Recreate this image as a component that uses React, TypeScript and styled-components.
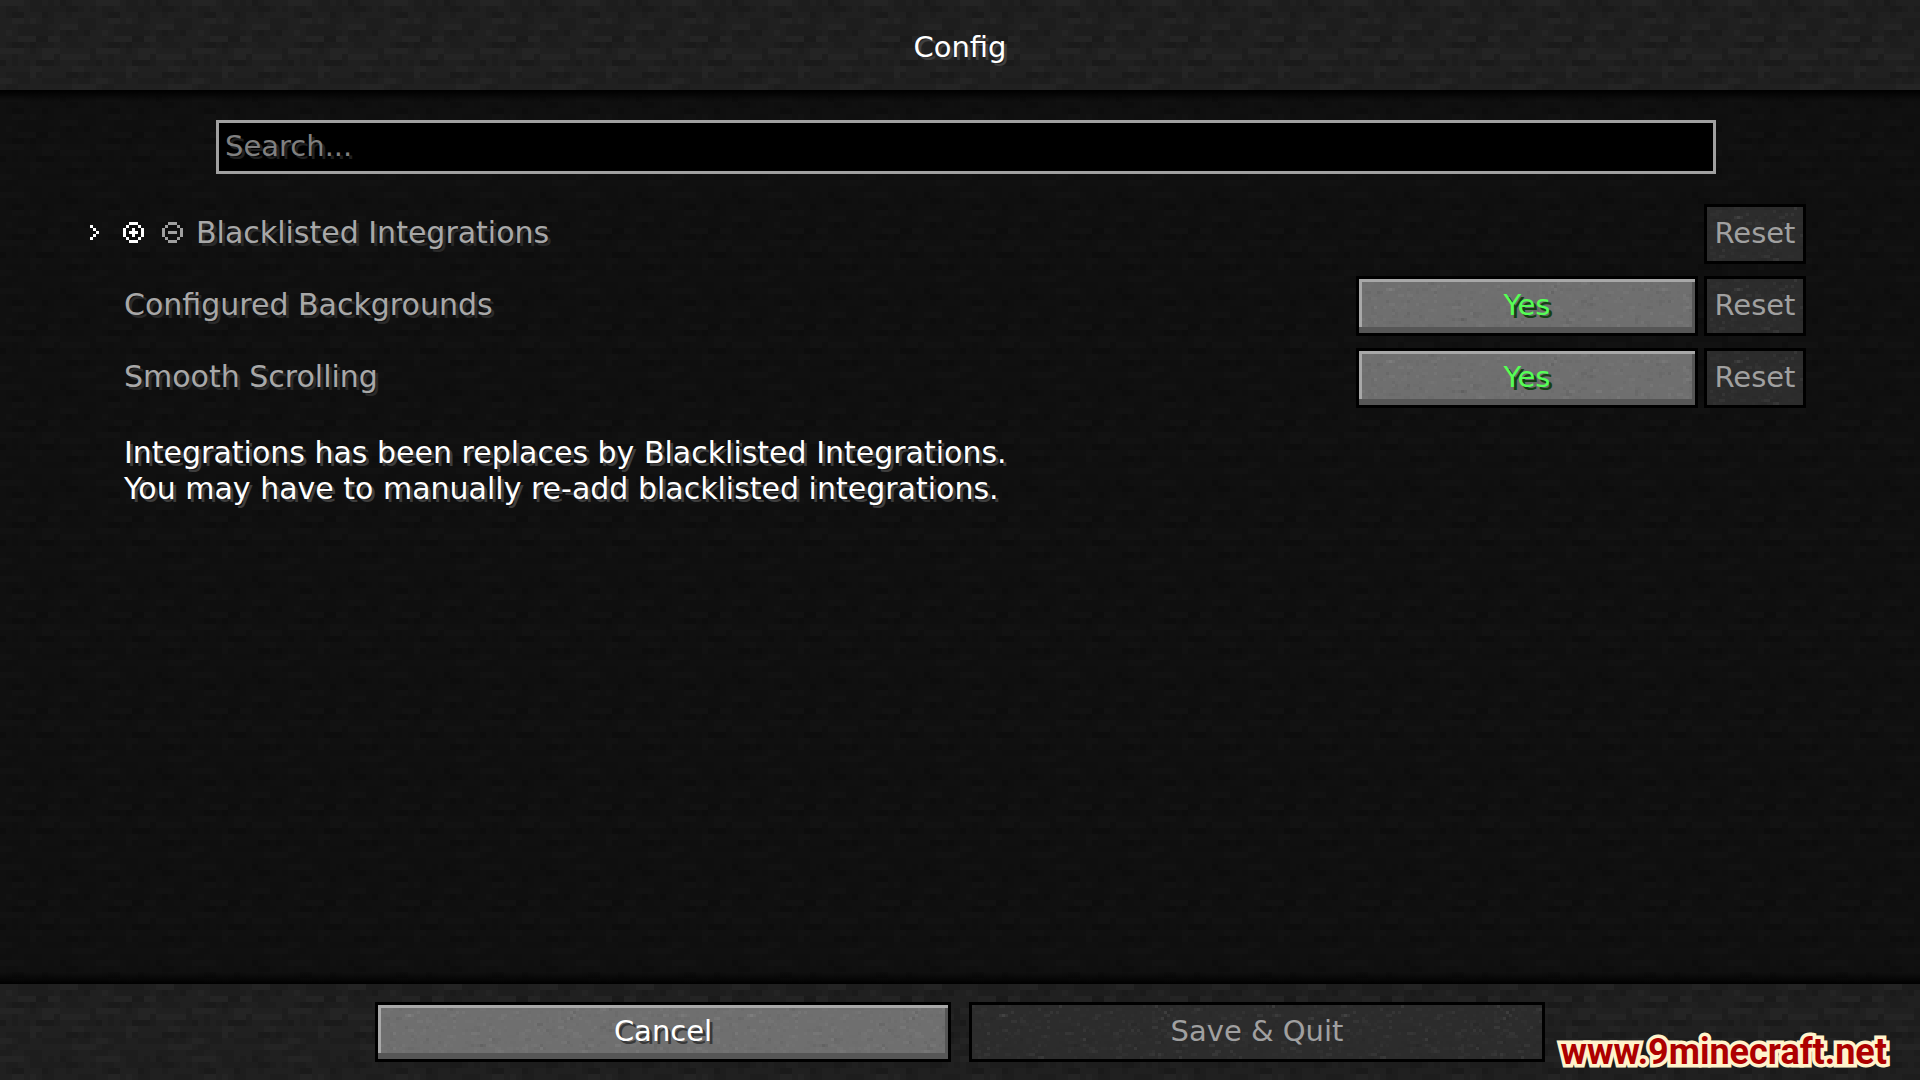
import React from 'react';
import styled, { createGlobalStyle } from 'styled-components';

const FONT = '"DejaVu Sans", "Noto Sans", sans-serif';

/* 16x16 stone texture, one digit per texel: 0 darkest, 3 lightest */
const STONE = [
  '3333211212012222',
  '2112211111100121',
  '2100222012212222',
  '2233232112222111',
  '2221111122333111',
  '2321111112101102',
  '2223330033111222',
  '2100101112211122',
  '3333212333222221',
  '2212222331333331',
  '0212120001222111',
  '2222233222223322',
  '2111131222200101',
  '3321122111112112',
  '2112222222223333',
  '1122111222111221',
];
const STONE_TONES = ['#1a1a1a', '#1d1d1d', '#202020', '#242424'];

const svgUrl = (width: number, height: number, body: string) =>
  `url("data:image/svg+xml,${encodeURIComponent(
    `<svg xmlns="http://www.w3.org/2000/svg" width="${width}" height="${height}" shape-rendering="crispEdges">${body}</svg>`,
  )}")`;

const stoneTexture = svgUrl(
  96,
  96,
  STONE.map((line, y) =>
    [...line]
      .map((d, x) => `<rect x="${x * 6}" y="${y * 6}" width="6" height="6" fill="${STONE_TONES[Number(d)]}"/>`)
      .join(''),
  ).join(''),
);

/* Fine speckle laid over the button faces */
const speckle = (() => {
  let seed = 11;
  const next = () => {
    seed = (seed * 16807) % 2147483647;
    return seed / 2147483647;
  };
  let body = '';
  for (let i = 0; i < 620; i += 1) {
    const x = Math.floor(next() * 114) * 3;
    const y = Math.floor(next() * 18) * 3;
    const w = next() > 0.6 ? 6 : 3;
    const light = next() > 0.5;
    const alpha = (0.01 + next() * next() * 0.06).toFixed(3);
    body += `<rect x="${x}" y="${y}" width="${w}" height="3" fill="${light ? '#fff' : '#000'}" fill-opacity="${alpha}"/>`;
  }
  return svgUrl(342, 54, body);
})();

const GlobalStyle = createGlobalStyle`
  *, *::before, *::after { box-sizing: border-box; }
  body { margin: 0; background: #202020; }
`;

const Screen = styled.div`
  position: relative;
  display: flex;
  flex-direction: column;
  min-height: 100vh;
  background: #202020 ${stoneTexture};
  color: #ffffff;
  font: 29px/36px ${FONT};
`;

const Header = styled.header`
  display: flex;
  align-items: center;
  justify-content: center;
  height: 90px;
  padding-top: 3px;
`;

const Title = styled.h1`
  margin: 0;
  font: inherit;
  text-shadow: 3px 3px #3e3e3e;
`;

const Content = styled.main`
  flex: 1;
  display: flex;
  flex-direction: column;
  padding-top: 30px;
  background:
    linear-gradient(#000000, transparent) top / 100% 12px no-repeat,
    linear-gradient(transparent, #000000) bottom / 100% 12px no-repeat,
    rgba(0, 0, 0, 0.48);
`;

const SearchBox = styled.input`
  height: 54px;
  margin: 0 204px 30px 216px;
  padding: 0 6px 3px;
  border: 3px solid #a0a0a0;
  border-radius: 0;
  outline: none;
  background: #000000;
  color: #e0e0e0;
  font: inherit;
  text-shadow: 3px 3px #202020;

  &::placeholder {
    color: #808080;
    opacity: 1;
  }
`;

const OptionList = styled.ul`
  display: flex;
  flex-direction: column;
  gap: 12px;
  margin: 0;
  padding: 0 114px 0 90px;
  list-style: none;
`;

const OptionRow = styled.li<{ $nested?: boolean }>`
  display: flex;
  align-items: center;
  gap: 6px;
  height: 60px;
  padding-left: ${({ $nested }) => ($nested ? '0' : '34px')};
`;

const IconGroup = styled.div`
  display: flex;
  align-items: center;
  gap: 18px;
  padding: 0 7px 3px 0;
`;

const IconButton = styled.button<{ $tone: string }>`
  display: flex;
  padding: 0;
  border: 0;
  background: none;
  color: ${({ $tone }) => $tone};
`;

const OptionName = styled.span`
  flex: 1;
  padding-bottom: 2px;
  color: #a8a8a8;
  font-size: 30px;
  text-shadow: 3px 3px #2a2a2a;
`;

const StoneButton = styled.button<{ $width: number; $green?: boolean }>`
  width: ${({ $width }) => $width}px;
  height: 60px;
  padding: 0 0 3px;
  border: 3px solid #000000;
  border-radius: 0;
  background: ${speckle} #6f6f6f;
  box-shadow:
    inset 0 -6px #565656,
    inset 3px 0 #a8a8a8,
    inset 0 3px #a8a8a8,
    inset -3px 0 #565656;
  color: ${({ $green }) => ($green ? '#55ff55' : '#ffffff')};
  font: inherit;
  text-shadow: 3px 3px ${({ $green }) => ($green ? '#153f15' : '#383838')};

  &:disabled {
    background: ${speckle} #2c2c2c;
    box-shadow: none;
    color: #a0a0a0;
    text-shadow: none;
  }
`;

const Notice = styled.p`
  margin: 27px 114px 0 124px;
  font-size: 30px;
  text-shadow: 3px 3px #3e3e3e;
`;

const Footer = styled.footer`
  display: flex;
  justify-content: center;
  gap: 18px;
  padding: 18px;
`;

const SiteLink = styled.a`
  position: absolute;
  right: 33px;
  bottom: 4px;
  color: #ad0000;
  font: bold 36px/48px Roboto, "Liberation Sans", sans-serif;
  text-decoration: none;
  -webkit-text-stroke: 7px #fff3cc;
  paint-order: stroke fill;
`;

const PLUS = ['..###..', '.#...#.', '#..#..#', '#.###.#', '#..#..#', '.#...#.', '..###..'];
const MINUS = ['..###..', '.#...#.', '#.....#', '#.###.#', '#.....#', '.#...#.', '..###..'];
const CHEVRON = ['#....', '.#...', '..#..', '.#...', '#....'];

function PixelIcon({ rows }: { rows: string[] }) {
  const size = rows.length * 3;
  const cells = rows
    .flatMap((line, y) => [...line].map((c, x) => (c === '#' ? `M${x * 3} ${y * 3}h3v3h-3z` : '')))
    .join('');
  return (
    <svg width={size} height={size} viewBox={`0 0 ${size} ${size}`} aria-hidden="true">
      <path d={cells} fill="currentColor" />
    </svg>
  );
}

function ToggleOption({ id, name }: { id: string; name: string }) {
  const [on, setOn] = React.useState(true);
  return (
    <OptionRow>
      <OptionName id={id}>{name}</OptionName>
      <StoneButton type="button" $width={342} $green aria-describedby={id} onClick={() => setOn(!on)}>
        {on ? 'Yes' : 'No'}
      </StoneButton>
      <StoneButton type="button" $width={102} disabled={on} aria-describedby={id} onClick={() => setOn(true)}>
        Reset
      </StoneButton>
    </OptionRow>
  );
}

export default function App() {
  return (
    <>
      <GlobalStyle />
      <Screen>
        <Header>
          <Title>Config</Title>
        </Header>
        <Content>
          <SearchBox type="text" placeholder="Search..." aria-label="Search" />
          <OptionList>
            <OptionRow $nested>
              <IconGroup>
                <IconButton type="button" $tone="#ffffff" aria-label="Expand">
                  <PixelIcon rows={CHEVRON} />
                </IconButton>
                <IconButton type="button" $tone="#ffffff" aria-label="Add entry">
                  <PixelIcon rows={PLUS} />
                </IconButton>
                <IconButton type="button" $tone="#a0a0a0" aria-label="Remove entry" disabled>
                  <PixelIcon rows={MINUS} />
                </IconButton>
              </IconGroup>
              <OptionName id="blacklist">Blacklisted Integrations</OptionName>
              <StoneButton type="button" $width={102} disabled aria-describedby="blacklist">
                Reset
              </StoneButton>
            </OptionRow>
            <ToggleOption id="backgrounds" name="Configured Backgrounds" />
            <ToggleOption id="scrolling" name="Smooth Scrolling" />
          </OptionList>
          <Notice>
            Integrations has been replaces by Blacklisted Integrations.
            <br />
            You may have to manually re-add blacklisted integrations.
          </Notice>
        </Content>
        <Footer>
          <StoneButton type="button" $width={576}>
            Cancel
          </StoneButton>
          <StoneButton type="button" $width={576} disabled>
            Save &amp; Quit
          </StoneButton>
        </Footer>
        <SiteLink href="#site">www.9minecraft.net</SiteLink>
      </Screen>
    </>
  );
}
